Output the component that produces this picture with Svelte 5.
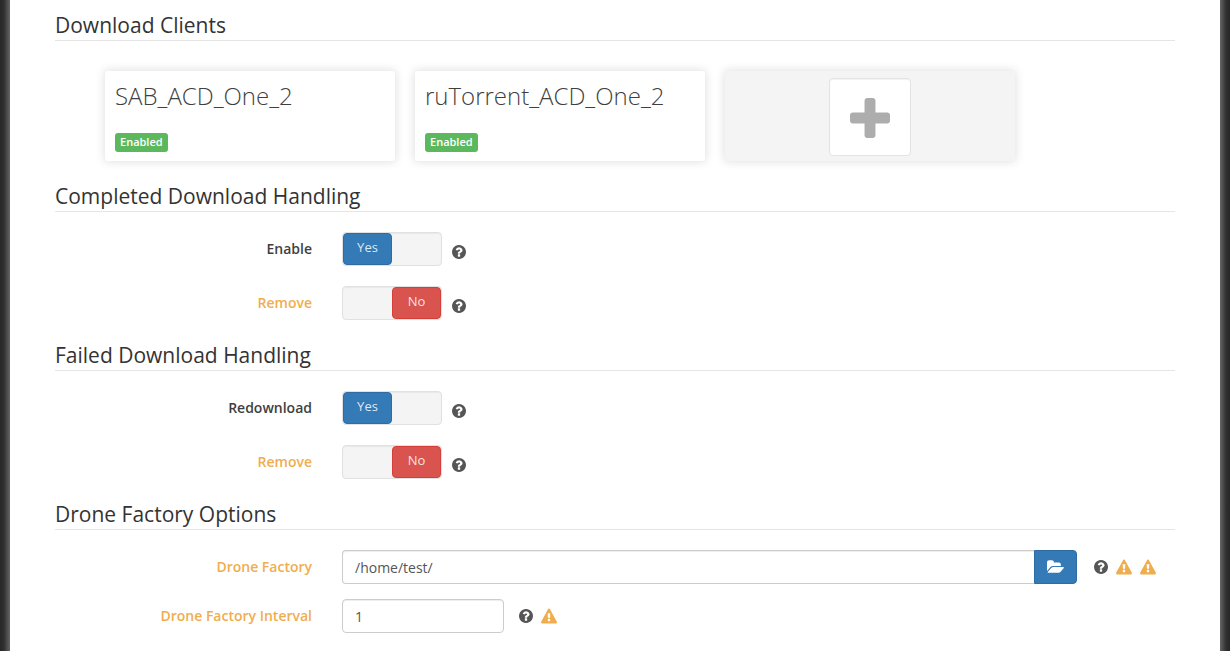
<script>
  let clients = ['SAB_ACD_One_2', 'ruTorrent_ACD_One_2'];
  let groups = $state([
    {
      title: 'Completed Download Handling',
      rows: [
        { id: 'completed-enable', label: 'Enable', advanced: false, on: true },
        { id: 'completed-remove', label: 'Remove', advanced: true, on: false }
      ]
    },
    {
      title: 'Failed Download Handling',
      rows: [
        { id: 'failed-redownload', label: 'Redownload', advanced: false, on: true },
        { id: 'failed-remove', label: 'Remove', advanced: true, on: false }
      ]
    }
  ]);
  let folder = $state('/home/test/');
  let interval = $state('1');
</script>

{#snippet help()}
  <svg class="icon" viewBox="128 128 1536 1536" aria-hidden="true"><path d="M1024 1376v-192q0-14-9-23t-23-9h-192q-14 0-23 9t-9 23v192q0 14 9 23t23 9h192q14 0 23-9t9-23zm256-672q0-88-55.500-163t-138.500-116-170-41q-243 0-371 213-15 24 8 42l132 100q7 6 19 6 16 0 25-12 53-68 86-92 34-24 86-24 48 0 85.500 26t37.500 59q0 38-20 61t-68 45q-63 28-115.500 86.500t-52.500 125.500v36q0 14 9 23t23 9h192q14 0 23-9t9-23q0-19 21.500-49.500t54.500-49.500q32-18 49-28.500t46-35 44.500-48 28-60.500 12.500-81zm384 192q0 209-103 385.500t-279.500 279.500-385.500 103-385.500-103-279.500-279.500-103-385.500 103-385.500 279.500-279.500 385.500-103 385.500 103 279.500 279.500 103 385.500z" /></svg>
{/snippet}

{#snippet warning()}
  <svg class="icon warn" viewBox="0 0 1792 1664" aria-hidden="true"><path d="M1024 1375v-190q0-14-9.500-23.500t-22.500-9.500h-192q-13 0-22.500 9.500t-9.500 23.500v190q0 14 9.500 23.500t22.500 9.500h192q13 0 22.500-9.500t9.500-23.500zm-2-374l18-459q0-12-10-19-13-11-24-11h-220q-11 0-24 11-10 7-10 21l17 457q0 10 10 16.500t24 6.500h185q14 0 23.500-6.500t10.500-16.500zm-14-934l768 1408q35 63-2 126-17 29-46.500 46t-63.500 17h-1536q-34 0-63.500-17t-46.500-46q-37-63-2-126l768-1408q17-31 47-49t65-18 65 18 47 49z" /></svg>
{/snippet}

<main class="page">
  <section>
    <h2>Download Clients</h2>
    <ul class="clients">
      {#each clients as name}
        <li class="card">
          <h3>{name}</h3>
          <span class="badge">Enabled</span>
        </li>
      {/each}
      <li class="card add">
        <button class="plus" aria-label="Add">
          <svg viewBox="192 128 1408 1408" aria-hidden="true"><path d="M1600 736v192q0 40-28 68t-68 28h-416v416q0 40-28 68t-68 28h-192q-40 0-68-28t-28-68v-416h-416q-40 0-68-28t-28-68v-192q0-40 28-68t68-28h416v-416q0-40 28-68t68-28h192q40 0 68 28t28 68v416h416q40 0 68 28t28 68z" /></svg>
        </button>
      </li>
    </ul>
  </section>

  {#each groups as group}
    <section>
      <h2>{group.title}</h2>
      <div class="rows switches">
        {#each group.rows as row}
          <div class="row">
            <label for={row.id} class:advanced={row.advanced}>{row.label}</label>
            <div class="controls">
              <span class="toggle">
                <input type="checkbox" id={row.id} bind:checked={row.on} />
                <span class="knob" class:on={row.on} aria-hidden="true">{row.on ? 'Yes' : 'No'}</span>
              </span>
              <span class="hints low">{@render help()}</span>
            </div>
          </div>
        {/each}
      </div>
    </section>
  {/each}

  <section>
    <h2>Drone Factory Options</h2>
    <div class="rows">
      <div class="row">
        <label for="drone-folder" class="advanced">Drone Factory</label>
        <div class="controls wide">
          <div class="path">
            <input class="field" type="text" id="drone-folder" bind:value={folder} />
            <button class="browse" aria-label="Browse">
              <svg viewBox="64 128 1888 1408" aria-hidden="true"><path d="M1943 952q0 31-31 66l-336 396q-43 51-120.500 86.500t-143.500 35.500h-1088q-34 0-60.500-13t-26.500-43q0-31 31-66l336-396q43-51 120.500-86.500t143.500-35.500h1088q34 0 60.500 13t26.500 43zm-343-344v160h-832q-94 0-197 47.500t-164 119.500l-337 396-5 6q0-4-.5-12.500t-.5-12.500v-960q0-92 66-158t158-66h320q92 0 158 66t66 158v32h544q92 0 158 66t66 158z" /></svg>
            </button>
          </div>
          <span class="hints">{@render help()}{@render warning()}{@render warning()}</span>
        </div>
      </div>
      <div class="row">
        <label for="drone-interval" class="advanced">Drone Factory Interval</label>
        <div class="controls">
          <input class="field short" type="text" inputmode="numeric" id="drone-interval" bind:value={interval} />
          <span class="hints spaced">{@render help()}{@render warning()}</span>
        </div>
      </div>
    </div>
  </section>
</main>

<style>
  :global(body) {
    margin: 0;
    background:
      linear-gradient(to right, #272727, #303030 4px, #666 10px) left / 10px 100% no-repeat,
      linear-gradient(to left, #272727, #303030 4px, #666 10px) right / 10px 100% no-repeat,
      #272727;
  }
  .page,
  .page * {
    box-sizing: border-box;
  }
  .page {
    min-height: 100vh;
    margin: 0 10px;
    padding: 10px 45px 18px;
    display: flex;
    flex-direction: column;
    gap: 20px;
    background: #fff;
    font: 14px/20px "Open Sans", sans-serif;
    color: #3f3f3f;
  }
  h2 {
    margin: 0 0 20px;
    border-bottom: 1px solid #e5e5e5;
    font-size: 21px;
    line-height: 30px;
    font-weight: 400;
    color: #333;
  }
  .clients {
    display: flex;
    flex-wrap: wrap;
    gap: 20px;
    margin: 0;
    padding: 10px 50px 0;
    list-style: none;
  }
  .card {
    display: flex;
    flex-direction: column;
    align-items: flex-start;
    justify-content: space-between;
    width: 290px;
    height: 90px;
    padding: 10px 10px 9px;
    border-radius: 3px;
    background: #fff;
    box-shadow: 0 0 10px 1px #e1e1e1;
  }
  h3 {
    margin: 0;
    font-size: 24px;
    line-height: 30px;
    font-weight: 300;
  }
  .badge {
    padding: 0 5px 2px;
    border-radius: 3px;
    background: #5cb85c;
    color: #fff;
    font-size: 11px;
    line-height: 17px;
    font-weight: 600;
  }
  .add {
    align-items: center;
    padding: 7px 10px 5px;
    background: #f4f4f4;
  }
  .plus {
    display: grid;
    place-items: center;
    width: 82px;
    height: 78px;
    padding: 2px 0 0;
    border: 1px solid #e3e3e3;
    border-radius: 4px;
    background: #fff;
    box-shadow: inset 0 1px 1px rgba(0, 0, 0, 0.05);
  }
  .plus svg {
    width: 40px;
    height: 40px;
    fill: #adadad;
  }
  .rows {
    display: flex;
    flex-direction: column;
    gap: 15px;
  }
  .switches {
    gap: 20px;
  }
  .row {
    display: grid;
    grid-template-columns: calc(25% - 23px) 1fr;
    gap: 30px;
  }
  label {
    padding-top: 7px;
    text-align: right;
    font-weight: 600;
  }
  .advanced {
    color: #f0ad4e;
  }
  .controls {
    display: flex;
    align-items: center;
    gap: 10px;
  }
  .wide {
    gap: 17px;
  }
  .toggle {
    position: relative;
    display: flex;
    width: 100px;
    height: 34px;
    border: 1px solid #e1e1e1;
    border-radius: 4px;
    background: #f4f4f4;
    box-shadow: inset 0 1px 1px rgba(0, 0, 0, 0.05);
  }
  .toggle input {
    position: absolute;
    inset: 0;
    width: 100%;
    height: 100%;
    margin: 0;
    opacity: 0;
    cursor: pointer;
  }
  .knob {
    width: 50%;
    margin-left: auto;
    border: 1px solid #d43f3a;
    border-radius: 4px;
    background: #d9534f;
    color: rgba(255, 255, 255, 0.85);
    font-size: 13px;
    line-height: 26px;
    text-align: center;
  }
  .knob.on {
    margin-left: 0;
    border-color: #2e6da4;
    background: #337ab7;
  }
  .path {
    display: flex;
    flex: 1;
  }
  .field {
    height: 34px;
    padding: 6px 12px;
    border: 1px solid #ccc;
    border-radius: 4px;
    background: #fff;
    box-shadow: inset 0 1px 1px rgba(0, 0, 0, 0.075);
    font: inherit;
    color: #555;
  }
  .path .field {
    flex: 1;
    min-width: 0;
    border-right: 0;
    border-radius: 4px 0 0 4px;
  }
  .short {
    width: 162px;
  }
  .browse {
    display: grid;
    place-items: center;
    width: 43px;
    height: 34px;
    padding: 0 0 2px;
    border: 1px solid #2e6da4;
    border-radius: 0 4px 4px 0;
    background: #337ab7;
  }
  .browse svg {
    width: 17px;
    height: 13px;
    fill: #fff;
  }
  .hints {
    display: flex;
    align-items: center;
    gap: 8px;
  }
  .wide .hints {
    width: 81px;
  }
  .low {
    padding-top: 5px;
  }
  .spaced {
    padding-left: 5px;
  }
  .icon {
    width: 14px;
    height: 14px;
    fill: #555;
  }
  .warn {
    width: 16px;
    height: 16px;
    fill: #f0ad4e;
  }
</style>
